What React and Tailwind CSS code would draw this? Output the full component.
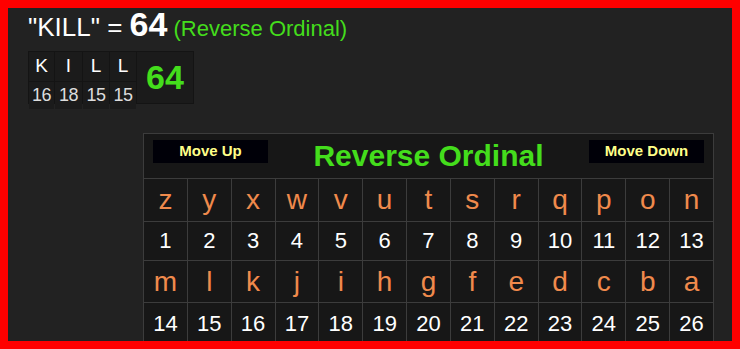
import React from "react";

const letters1 = ["z", "y", "x", "w", "v", "u", "t", "s", "r", "q", "p", "o", "n"];
const letters2 = ["m", "l", "k", "j", "i", "h", "g", "f", "e", "d", "c", "b", "a"];

const word = [
  { l: "K", n: 16, w: "w-[25px]" },
  { l: "I", n: 18, w: "w-[27px]" },
  { l: "L", n: 15, w: "w-[26px]" },
  { l: "L", n: 15, w: "w-[26px]" },
];

const LetterRow = ({ items, h }) => (
  <tr className={h}>
    {items.map((c, i) => (
      <td
        key={i}
        className="border border-[#3c3c3c] text-center text-[28px] leading-none text-[#f08a4c]"
      >
        {c}
      </td>
    ))}
  </tr>
);

const NumberRow = ({ start, h }) => (
  <tr className={h}>
    {Array.from({ length: 13 }, (_, i) => (
      <td
        key={i}
        className="border border-[#3c3c3c] text-center text-[22px] leading-none text-white"
      >
        {start + i}
      </td>
    ))}
  </tr>
);

const App = () => {
  return (
    <div className="w-[740px] h-[349px] border-8 border-[#ff0000] bg-[#222222] overflow-hidden font-['Liberation_Sans',Arial,sans-serif]">
      <div className="pl-[20px]">
        {/* title line */}
        <div className="-mt-px flex items-baseline h-[43px] whitespace-pre leading-none">
          <span className="text-[26px] text-white">"KILL" = </span>
          <span className="text-[34px] font-bold text-white">64</span>
          <span className="text-[22px] text-[#44dd1c]"> (Reverse Ordinal)</span>
        </div>

        {/* word breakdown */}
        <div className="mt-[1px] flex w-[166px] h-[53px] bg-[#141414] border border-[#141414] gap-px">
          {word.map((c, i) => (
            <div key={i} className={`flex flex-col gap-px ${c.w}`}>
              <div className="flex-1 bg-[#1b1b1b] flex items-center justify-center text-[19px] text-white">
                {c.l}
              </div>
              <div className="flex-1 bg-[#1b1b1b] flex items-center justify-center text-[18px] tracking-[-0.5px] text-[#dddddd]">
                {c.n}
              </div>
            </div>
          ))}
          <div className="flex-1 bg-[#1b1b1b] flex items-center justify-center text-[34px] font-bold text-[#44dd1c]">
            64
          </div>
        </div>

        {/* cipher chart */}
        <table className="mt-[29px] ml-[115px] w-[571px] table-fixed border-collapse bg-[#171717]">
          <thead>
            <tr className="h-[45px]">
              <th colSpan="13" className="border border-[#3c3c3c] p-0 align-top">
                <div className="flex items-start justify-between px-[9px] pt-[6px]">
                  <button className="w-[115px] h-[23px] bg-[#000008] text-[15px] font-bold text-[#ffff88]">
                    Move Up
                  </button>
                  <div className="text-[30px] font-bold leading-none text-[#44dd1c] mt-[1px]">
                    Reverse Ordinal
                  </div>
                  <button className="w-[115px] h-[23px] bg-[#000008] text-[15px] font-bold text-[#ffff88]">
                    Move Down
                  </button>
                </div>
              </th>
            </tr>
          </thead>
          <tbody>
            <LetterRow items={letters1} h="h-[43px]" />
            <NumberRow start={1} h="h-[39px]" />
            <LetterRow items={letters2} h="h-[42px]" />
            <NumberRow start={14} h="h-[42px]" />
          </tbody>
        </table>
      </div>
    </div>
  );
};

export default App;
